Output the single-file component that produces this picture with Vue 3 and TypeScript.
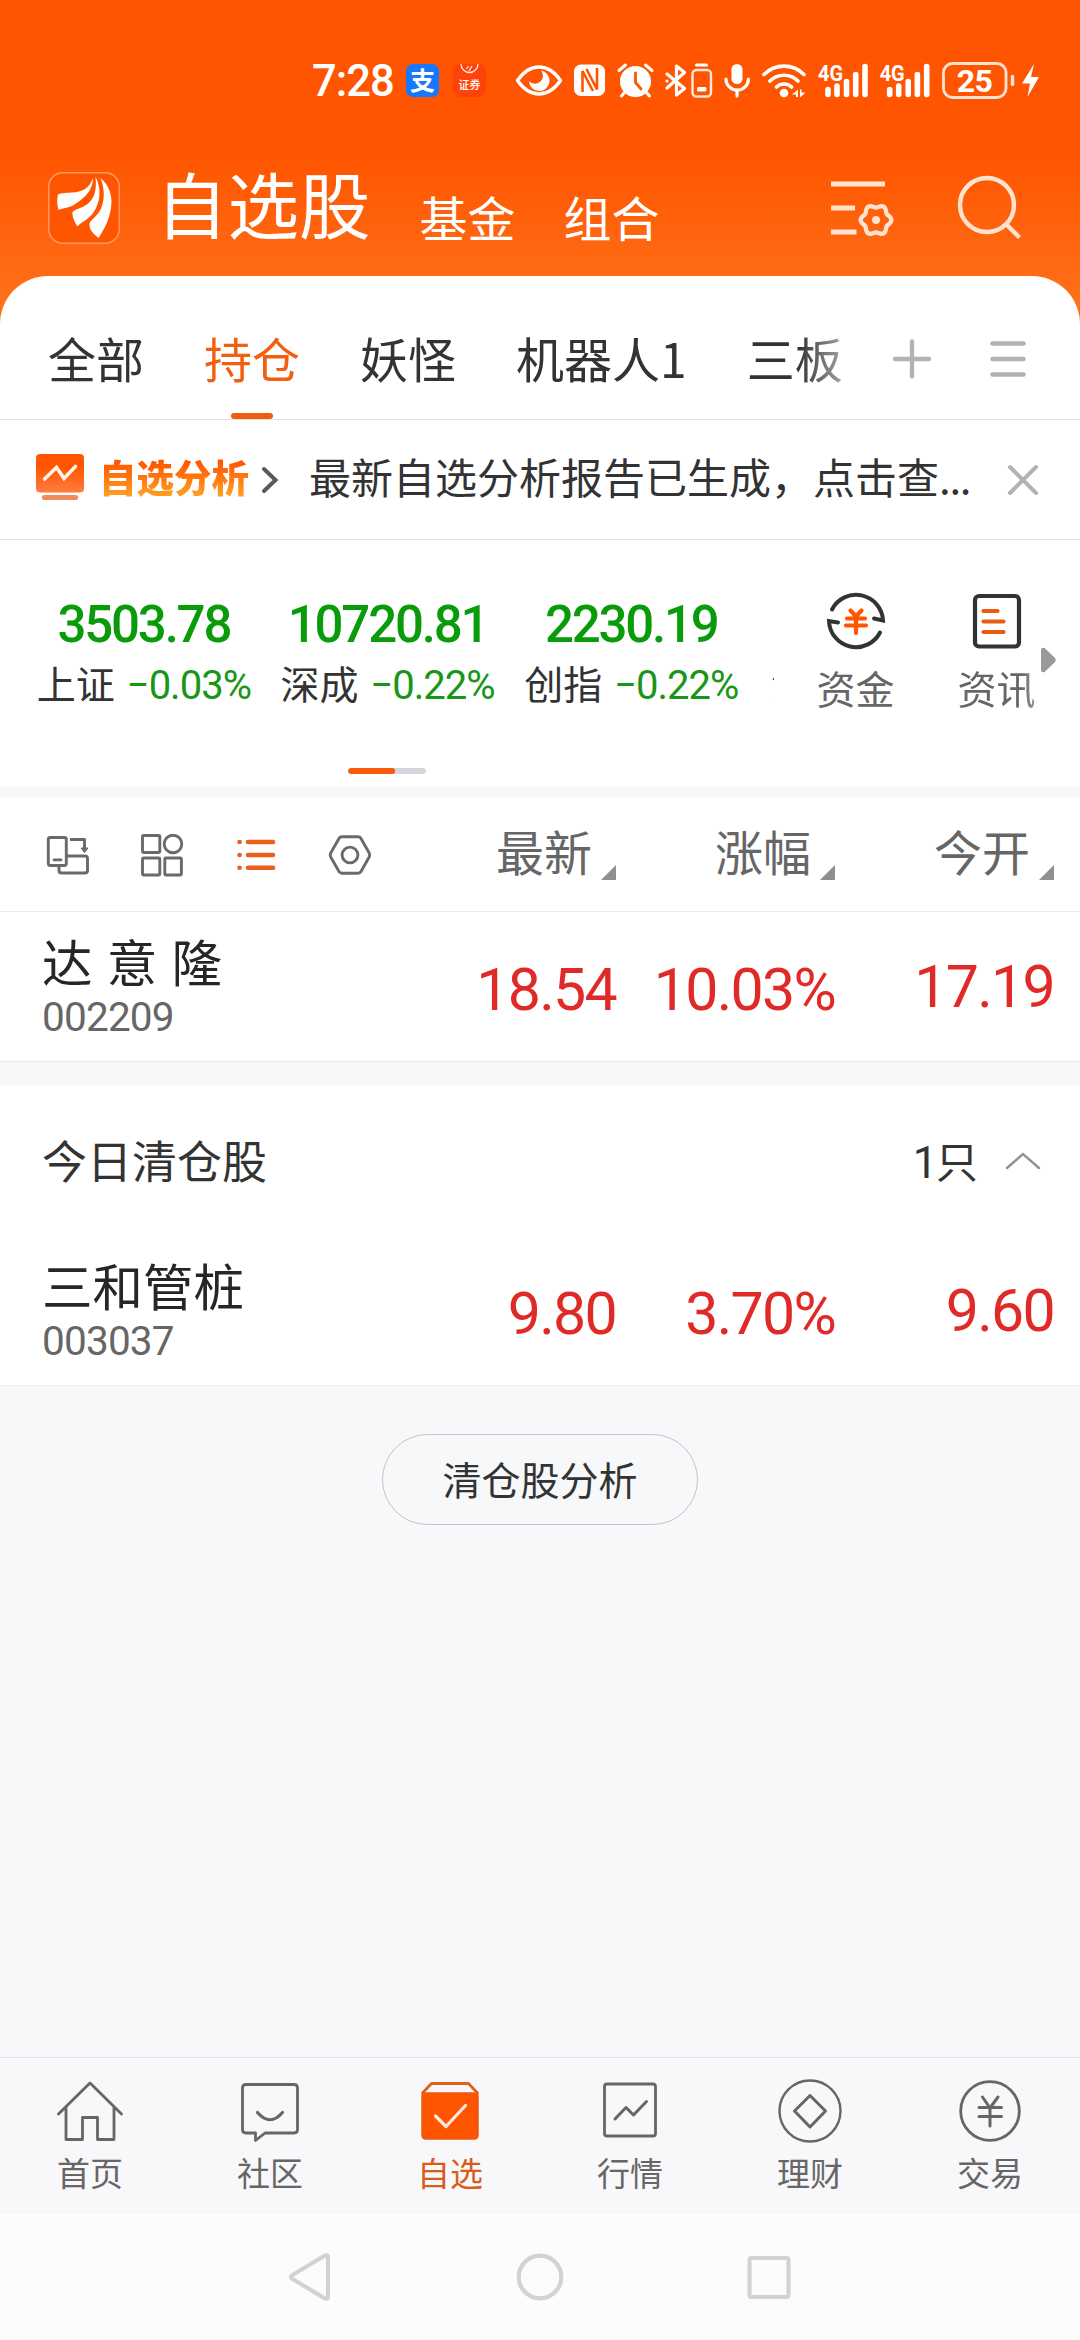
<script setup lang="ts">
interface Index { name: string; value: string; change: string }
interface Stock { name: string; code: string; last: string; pct: string; open: string }

const groups: string[] = ['全部', '持仓', '妖怪', '机器人1', '三板']
const activeGroup = '持仓'
const indices: Index[] = [
  { name: '上证', value: '3503.78', change: '−0.03%' },
  { name: '深成', value: '10720.81', change: '−0.22%' },
  { name: '创指', value: '2230.19', change: '−0.22%' },
]
const columns: string[] = ['最新', '涨幅', '今开']
const held: Stock = { name: '达 意 隆', code: '002209', last: '18.54', pct: '10.03%', open: '17.19' }
const cleared: Stock = { name: '三和管桩', code: '003037', last: '9.80', pct: '3.70%', open: '9.60' }
const tabs: string[] = ['首页', '社区', '自选', '行情', '理财', '交易']

// Six-lobed outline of the settings gear
const gear: string =
  Array.from({ length: 72 }, (_, i) => {
    const a = (i * 5 * Math.PI) / 180
    const r = 13.9 + 1.5 * Math.cos(6 * a)
    return `${i ? 'L' : 'M'}${(46 + r * Math.cos(a)).toFixed(2)} ${(42 + r * Math.sin(a)).toFixed(2)}`
  }).join('') + 'Z'
</script>

<template>
  <div class="app">
    <header class="top">
      <div class="status">
        <span class="clock">7:28</span>
        <svg class="status-icons" width="650" height="50" viewBox="400 55 650 50" fill="none">
          <rect x="406" y="64" width="33" height="33" rx="7" fill="#1677ff" />
          <text x="422.5" y="89.5" text-anchor="middle" class="cjk" font-size="25" font-weight="700" fill="#fff">支</text>
          <rect x="453" y="64" width="33" height="33" rx="7" fill="#ff4209" />
          <path d="M461 64a8.5 8.5 0 0 0 17 0" stroke="#ffe9dc" stroke-width="1.3" />
          <path d="M466.500 69l2-3M469 71l3-5" stroke="#ffe9dc" stroke-width="1.3" />
          <text x="469.500" y="88.500" text-anchor="middle" class="cjk" font-size="11" font-weight="500" fill="#fff">证券</text>
          <g stroke="#fff" stroke-width="3.4" stroke-linecap="round" stroke-linejoin="round">
            <path d="M517.500 80.500C530 62.500 548 62.500 560.500 80.500C548 98.500 530 98.500 517.500 80.500Z" />
          </g>
          <path d="M541 70.500a10.300 10.300 0 1 1-12 10.500a7.500 7.500 0 0 0 12-10.500z" fill="#fff" />
          <rect x="574" y="64.500" width="31" height="31.500" rx="7" fill="#fff" />
          <path d="M582.500 92V71L593 91M597 68V89.500L586.500 69" stroke="#ff5500" stroke-width="2.600" />
          <circle cx="635.500" cy="81.500" r="15.500" fill="#fff" />
          <path d="M619 70.500l6.500-5.500M652 70.500l-6.500-5.500M625 92l-3.500 4M646 92l3.500 4" stroke="#fff" stroke-width="3" stroke-linecap="round" />
          <path d="M635.500 73v9.500l5.500 6.500" stroke="#ff5500" stroke-width="2.800" stroke-linecap="round" />
          <path d="M667 74l17.500 14.500-8 6.500v-29l8 6.500L667 88" stroke="#fff" stroke-width="3.200" stroke-linejoin="round" stroke-linecap="round" />
          <circle cx="667" cy="81" r="1.600" fill="#fff" />
          <path d="M696.500 65h10" stroke="#fff" stroke-width="3" stroke-linecap="round" />
          <rect x="692.500" y="70" width="18.500" height="26.500" rx="4" stroke="#ffe8da" stroke-width="2.400" />
          <rect x="697" y="87" width="9.500" height="4.500" rx="1.500" fill="#fff" />
          <rect x="731.500" y="64" width="11" height="20" rx="5.500" fill="#fff" />
          <path d="M726 79a11.200 11 0 0 0 22.400 0M737 90v6" stroke="#fff" stroke-width="3.200" stroke-linecap="round" />
          <path d="M764 74.500a28 28 0 0 1 40 0M770 81a20 20 0 0 1 28 0M776.500 87a11 11 0 0 1 15 0" stroke="#fff" stroke-width="3.600" stroke-linecap="round" />
          <circle cx="784" cy="93" r="4.300" fill="#fff" />
          <path d="M792 94.500l6-5v7.500h-2v-2.500zM805.500 92.500l-5.500 5v-8h1.500v3z" fill="#fff" />
          <g v-for="dx in [0, 61.7]" :key="dx" :transform="`translate(${dx} 0)`">
            <text x="818" y="80.500" textLength="25" lengthAdjust="spacingAndGlyphs" class="rob" font-size="21.500" font-weight="700" fill="#fff">4G</text>
            <path d="M828 89.500v5M837 86v8.500M846.500 81.500v13M855.700 74.500v20M865 66.500v28" stroke="#fff" stroke-width="5.600" stroke-linecap="round" />
          </g>
          <rect x="943.500" y="63.500" width="62.500" height="34" rx="9" stroke="#ffe3d2" stroke-width="2.800" />
          <text x="974.500" y="91.500" text-anchor="middle" class="rob" font-size="32" font-weight="700" letter-spacing="-.5" fill="#fff">25</text>
          <path d="M1012.500 76.500v8" stroke="#ffe3d2" stroke-width="3.500" stroke-linecap="round" />
          <path d="M1034 64l-12 19.500h8l-2.500 13.500 11.500-20h-8z" fill="#fff" />
        </svg>
      </div>
      <div class="brand">
        <svg class="logo" width="72" height="72" viewBox="0 0 72 72">
          <rect x=".75" y=".75" width="70.500" height="70.500" rx="14" fill="#ff5500" stroke="#ff9a66" stroke-width="1.500" />
          <g fill="#fff">
            <path d="M45 6C41 17 34 20 24 20.500C17 21 12 21 10 22.500C8.800 27 9 33 10.500 38C15 36 22 36 28 31.500C38 25 45 17 45 6Z" />
            <path d="M47.500 5C49 19 46 27 39 32.500C33 36.500 27 37 24.500 40C24 45 27 51 29.500 54.500C33 50 38 49 43 43.500C52 34 54.500 17 47.500 5Z" />
            <path d="M52.500 6C60 12 63.500 21 63.500 30C63 45 57 56 50.500 66C46 62 41 58 41.500 52C42 48 49 45 53 36.500C57.500 26 56 15 52.500 6Z" />
          </g>
        </svg>
        <h1>自选股</h1>
        <span class="sub">基金</span>
        <span class="sub">组合</span>
        <svg class="tune" width="64" height="60" viewBox="0 0 64 60" fill="none" stroke="#ffe3d0" stroke-width="5">
          <path d="M1 6h54M1 30h24M1 54h25.500" />
          <path :d="gear" stroke-width="4.300" />
          <circle cx="46" cy="42" r="4" fill="#ffe3d0" stroke="none" />
        </svg>
        <svg class="search" width="66" height="66" viewBox="0 0 66 66" fill="none" stroke="#ffe3d0" stroke-width="4.400">
          <circle cx="30" cy="30" r="27" />
          <path d="M49 49l13.500 13.500" />
        </svg>
      </div>
    </header>

    <main>
      <nav class="groups">
        <div class="group-list">
          <span v-for="g in groups" :key="g" class="group" :class="{ on: g === activeGroup }">{{ g }}</span>
        </div>
        <svg class="plus" width="40" height="40" viewBox="0 0 40 40" stroke="#b2b2b2" stroke-width="4.300" stroke-linecap="round">
          <path d="M20 2.500v35M3 20h34" />
        </svg>
        <svg class="menu" width="36" height="40" viewBox="0 0 36 40" stroke="#b2b2b2" stroke-width="4.600" stroke-linecap="round">
          <path d="M2.500 4.500h31M2.500 20h31M2.500 35.500h31" />
        </svg>
      </nav>

      <section class="notice">
        <svg width="48" height="47" viewBox="0 0 48 47" fill="none">
          <defs>
            <linearGradient id="screen" x1="0" y1="0" x2="0" y2="1">
              <stop offset=".35" stop-color="#ff5500" /><stop offset="1" stop-color="#ff7d42" />
            </linearGradient>
          </defs>
          <rect width="48" height="38.500" rx="4" fill="url(#screen)" />
          <path d="M8.500 25L20.500 13.500l7.500 11L39.500 12.500" stroke="#fff3e8" stroke-width="3.600" stroke-linecap="round" />
          <rect x="6" y="41" width="36" height="5" rx="2" fill="#f08a5c" />
        </svg>
        <b>自选分析</b>
        <svg class="go" width="18" height="30" viewBox="0 0 18 30" fill="none" stroke="#5a5a5a" stroke-width="4" stroke-linecap="round">
          <path d="M3 4l11.500 11L3 26" />
        </svg>
        <span class="msg">最新自选分析报告已生成，点击查<i>...</i></span>
        <svg class="close" width="32" height="32" viewBox="0 0 32 32" stroke="#b2b2b2" stroke-width="4" stroke-linecap="round">
          <path d="M3 3l26 26M29 3L3 29" />
        </svg>
      </section>

      <section class="market">
        <div class="indices">
          <div v-for="i in indices" :key="i.name" class="index">
            <span class="value">{{ i.value }}</span>
            <span class="line">{{ i.name }}<em>{{ i.change }}</em></span>
          </div>
          <div class="index next">
            <span class="value"></span>
            <span class="line">沪深</span>
          </div>
        </div>
        <div class="shortcuts">
          <div class="shortcut">
            <svg width="60" height="60" viewBox="0 0 60 60" fill="none" stroke="#333" stroke-width="4" stroke-linecap="round">
              <path d="M6 18.500A27 27 0 0 1 57 29.500L48 27.500" />
              <path d="M54 41.500A27 27 0 0 1 3 30L12 31.500" />
              <path d="M24.500 19.500l5.500 6 5.500-6M21 27.500h18M20 34.500h20M30 27v15" stroke="#ff5500" stroke-width="4.200" />
            </svg>
            <span>资金</span>
          </div>
          <div class="shortcut fade">
            <svg width="60" height="60" viewBox="0 0 60 60" fill="none" stroke="#333" stroke-width="4.200" stroke-linecap="round">
              <rect x="8" y="5" width="44" height="50.500" rx="4" />
              <path d="M16.500 20h14M16.500 30.500h20M16.500 41h20" stroke="#ea5c14" />
            </svg>
            <span>资讯</span>
          </div>
          <svg class="more" width="15" height="26" viewBox="0 0 15 26">
            <path d="M0 3Q0 0 3.500 1L13.500 10.500Q16 13 13.500 15.500L3.500 25Q0 26 0 23Z" fill="#999" />
          </svg>
        </div>
        <div class="pager"><i></i></div>
      </section>

      <section class="thead">
        <svg class="views" width="330" height="44" viewBox="45 833 330 44" fill="none" stroke="#6a6a6a" stroke-width="2.900" stroke-linejoin="round">
          <rect x="48.300" y="837.500" width="18" height="28" rx="2" />
          <path d="M54 859.800h7" stroke-width="2.800" stroke-linecap="round" />
          <path d="M66.500 856h18.500q2.500 0 2.500 2.500v12q0 2.500-2.500 2.500H61.500q-2.500 0-2.500-2.500V866" />
          <path d="M70 839.500h14.500v9" /><path d="M81 848h7l-3.500 4.500z" fill="#6a6a6a" stroke-width="1" />
          <rect x="142.500" y="835.500" width="17.300" height="17" rx="1" />
          <circle cx="173" cy="844" r="8.800" />
          <rect x="142.500" y="858" width="17.300" height="17" rx="1" />
          <rect x="164.800" y="858" width="16.600" height="17" rx="1" />
          <g stroke="#ea5f1a" stroke-width="4.600" stroke-linecap="round">
            <path d="M239.500 842h.1M239.500 855h.1M239.500 867.800h.1M248 842h25M248 855h25M248 867.800h25" />
          </g>
          <path d="M342 836.800h16q2 0 3 1.700l8.200 14.500q1 2 0 4L361 871.500q-1 1.700-3 1.700h-16q-2 0-3-1.700L330.700 857q-1-2 0-4L339 838.500q1-1.700 3-1.700Z" />
          <circle cx="350" cy="855" r="7.900" />
        </svg>
        <span v-for="c in columns" :key="c" class="col">{{ c }}<svg width="15" height="15" viewBox="0 0 15 15"><path d="M15 0v15H0z" fill="#8e8e93" /></svg></span>
      </section>

      <section class="row">
        <div class="who"><span class="name">{{ held.name }}</span><span class="code">{{ held.code }}</span></div>
        <span class="num">{{ held.last }}</span>
        <span class="num">{{ held.pct }}</span>
        <span class="num open">{{ held.open }}</span>
      </section>

      <div class="band"></div>

      <section class="cleared">
        <span class="title">今日清仓股</span>
        <span class="count"><i>1</i>只</span>
        <svg width="36" height="18" viewBox="0 0 36 18" fill="none" stroke="#929292" stroke-width="2.400" stroke-linecap="round">
          <path d="M2 16L18 2l16 14" />
        </svg>
      </section>
      <section class="row last">
        <div class="who"><span class="name">{{ cleared.name }}</span><span class="code">{{ cleared.code }}</span></div>
        <span class="num">{{ cleared.last }}</span>
        <span class="num">{{ cleared.pct }}</span>
        <span class="num open">{{ cleared.open }}</span>
      </section>

      <div class="rest"><button>清仓股分析</button></div>
    </main>

    <nav class="tabs">
      <div v-for="(t, k) in tabs" :key="t" class="tab" :class="{ on: t === '自选' }">
        <svg width="70" height="70" viewBox="0 0 70 70" fill="none" stroke="#666" stroke-width="2.800" stroke-linejoin="round" stroke-linecap="round">
          <template v-if="k === 0">
            <path d="M3.500 36L35 5l31.500 31" />
            <path d="M11 30v31.500h16.500V39.500h15V61.500h16.500V30" />
          </template>
          <template v-else-if="k === 1">
            <path d="M11 6.500h48q3.500 0 3.500 3.500v41.500q0 3.500-3.500 3.500H30l-9.500 7.500V55H11q-3.500 0-3.500-3.500V10q0-3.500 3.500-3.500Z" />
            <path d="M22.500 34.500q12.500 14.500 25 0" stroke-width="3.200" />
          </template>
          <template v-else-if="k === 2">
            <path d="M7.500 15L16.500 5.500h37L62.500 15" stroke="#e0611c" />
            <path d="M10 15h50q3 0 3 3v39q0 4-4 4H11q-4 0-4-4V18q0-3 3-3Z" fill="#ff5500" stroke="#e85a10" stroke-width="1.500" />
            <path d="M20.500 38L31 48.500 50.500 27.500" stroke="#ffe9dc" stroke-width="3.200" />
          </template>
          <template v-else-if="k === 3">
            <rect x="9.500" y="6" width="51" height="52" rx="2.500" />
            <path d="M20 41l11-11.500 7.500 7.500L51.500 23.500" stroke-width="3" />
          </template>
          <template v-else-if="k === 4">
            <circle cx="35" cy="33" r="30.500" stroke-width="2.400" />
            <path d="M35 17.500L50.500 33 35 49 19.500 33Z" stroke-width="3" />
          </template>
          <template v-else>
            <circle cx="35" cy="33" r="29.300" />
            <path d="M27.500 19L35 30l8-11M24 29.500h22.500M24 38.500h22.500M35 30v18" stroke-width="3" />
          </template>
        </svg>
        <span>{{ t }}</span>
      </div>
    </nav>

    <footer class="sysnav">
      <svg width="50" height="50" viewBox="0 0 50 50"><path d="M38.500 3.800q3.500-1.800 3.500 2v38.400q0 3.800-3.500 2L6.500 27q-3-2 0-4Z" /></svg>
      <svg width="50" height="50" viewBox="0 0 50 50"><circle cx="25" cy="25" r="21.300" /></svg>
      <svg width="50" height="50" viewBox="0 0 50 50"><rect x="5.500" y="6" width="39" height="39" rx="2" /></svg>
    </footer>
  </div>
</template>

<style>
body { margin: 0; background: #f7f8fa; }
</style>

<style scoped>
.app {
  width: 1080px; height: 2340px; overflow: hidden; display: flex; flex-direction: column;
  font-family: "Noto Sans CJK SC", sans-serif; color: #333;
  background: linear-gradient(#ff5500 0 155px, #ff7019 300px, #ff7019 330px, #f7f8fa 330px);
}
svg { display: block; flex: none; }
i, em { font-style: normal; }
.cjk { font-family: "Noto Sans CJK SC", sans-serif; }
.rob, .clock, .value, em, .code, .num { font-family: Roboto, sans-serif; }

.top { height: 276px; flex: none; }
.status { height: 110px; display: flex; padding-left: 312px; }
.clock { width: 88px; font-size: 43.500px; font-weight: 500; line-height: 50px; margin-top: 57px; color: #fff; letter-spacing: -1px; white-space: nowrap; }
.status-icons { margin-top: 55px; }
.brand { height: 166px; display: flex; align-items: flex-start; color: #fff; }
.logo { margin: 62px 0 0 48px; }
h1 { margin: 50px 49px 0 36px; font-size: 71.500px; line-height: 84px; font-weight: 400; }
.sub { font-size: 48px; line-height: 60px; margin: 76px 48px 0 0; }
.tune { margin: 68px 0 0 122px; }
.search { margin: 65px 0 0 63px; }

main { flex: 1; display: flex; flex-direction: column; background: #fff; border-radius: 48px 48px 0 0; }
.groups { height: 143px; border-bottom: 1px solid #e4e4e6; display: flex; align-items: flex-start; flex: none; }
.group-list {
  width: 794px; height: 143px; margin-left: 48px; display: flex; gap: 60px; overflow: hidden; white-space: nowrap;
  mask-image: linear-gradient(90deg, #000 750px, rgba(0, 0, 0, .45) 794px);
}
.group { position: relative; flex: none; font-size: 48px; line-height: 60px; height: 143px; box-sizing: border-box; padding-top: 51px; }
.group.on { color: #f2600f; }
.group.on::after { content: ""; position: absolute; left: 27px; bottom: 0; width: 42px; height: 6px; border-radius: 3px; background: #f45c0c; }
.plus { margin: 63px 0 0 50px; }
.menu { margin: 63px 0 0 58px; }

.notice { height: 119px; border-bottom: 1px solid #e4e4e6; display: flex; align-items: flex-start; flex: none; padding-left: 36px; }
.notice > svg:first-child { margin-top: 34px; }
.notice b {
  font-size: 37.500px; line-height: 50px; font-weight: 900; margin: 31px 0 0 15px; white-space: nowrap;
  background: linear-gradient(#ff5500 20%, #ff9a22 85%); background-clip: text; color: transparent;
}
.go { margin: 45px 0 0 12px; }
.msg { margin: 28px 0 0 30px; font-size: 42px; line-height: 56px; width: 698px; white-space: nowrap; }
.msg i { letter-spacing: -1.300px; }
.close { margin-top: 44px; }

.market { height: 246px; flex: none; display: grid; grid-template: 224px 22px / 774px 306px; }
.indices { display: flex; overflow: hidden; padding-left: 22px; }
.index { width: 243.700px; flex: none; display: flex; flex-direction: column; align-items: center; white-space: nowrap; }
.value { height: 60px; margin-top: 55px; font-size: 51px; line-height: 60px; font-weight: 500; letter-spacing: -2.200px; color: #0a9b0a; }
.line { font-size: 39px; line-height: 50px; margin-top: 2px; }
.index em { font-size: 40px; letter-spacing: -1px; color: #179617; margin-left: 12px; }
.next { align-items: flex-start; padding-left: 18px; }
.shortcuts { display: flex; position: relative; padding-left: 11px; }
.shortcut { width: 141px; display: flex; flex-direction: column; align-items: center; padding-top: 51px; font-size: 39px; line-height: 50px; color: #666; }
.shortcut span { margin-top: 11px; }
.fade { mask-image: linear-gradient(90deg, #000 95px, rgba(0, 0, 0, .5) 118px); }
.more { position: absolute; left: 267px; top: 107px; }
.pager { width: 78px; height: 6px; margin: 4px 0 0 348px; border-radius: 3px; overflow: hidden; background: #d3d7dc; }
.pager i { display: block; width: 47px; height: 6px; border-radius: 3px; background: #f65b0c; }

.thead { height: 113px; border-top: 12px solid #f7f8fa; border-bottom: 1px solid #ebebed; display: flex; flex: none; }
.views { margin: 35px 22px 0 45px; }
.col { width: 219px; height: 82px; display: flex; justify-content: flex-end; align-items: flex-end; gap: 9px; font-size: 48px; line-height: 60px; color: #666; }

.row { height: 149px; flex: none; display: flex; border-bottom: 1px solid #ebebed; }
.who { width: 355px; padding-left: 42px; display: flex; flex-direction: column; white-space: nowrap; }
.name { font-size: 50.500px; line-height: 60px; margin-top: 18px; word-spacing: 3px; color: #262626; }
.code { font-size: 40.500px; line-height: 48px; margin-top: 3px; letter-spacing: -.800px; color: #666; }
.num { width: 219px; text-align: right; font-size: 59px; line-height: 70px; margin-top: 43px; letter-spacing: -1.700px; color: #e02a28; }
.num.open { margin-top: 40px; }
.band { height: 24px; flex: none; background: #f7f8fa; }

.cleared { height: 150px; flex: none; display: flex; align-items: flex-start; padding-left: 42px; }
.title { font-size: 45px; line-height: 56px; margin-top: 46px; }
.count { font-size: 42px; line-height: 56px; margin: 46px 0 0 auto; }
.count i { font-family: Roboto, sans-serif; font-size: 44px; letter-spacing: -1.500px; }
.cleared svg { margin: 66px 39px 0 27px; }

.rest { flex: 1; background: #f7f8fa; display: flex; justify-content: center; align-items: flex-start; padding-top: 48px; }
button { width: 316px; height: 91px; padding: 0 0 4px; border: 1.500px solid #c2c3c6; border-radius: 46px; background: none; font: 39px "Noto Sans CJK SC", sans-serif; color: #333; }

.tabs { height: 156px; flex: none; border-top: 1px solid #e0e1e4; background: #f8f8fb; display: flex; }
.tab { width: 180px; display: flex; flex-direction: column; align-items: center; font-size: 33px; line-height: 40px; color: #666; }
.tab svg { margin-top: 20px; }
.tab span { margin-top: 4px; }
.tab.on { color: #da5c1a; }

.sysnav { height: 126px; flex: none; background: #fcfcfc; display: flex; justify-content: center; gap: 179px; }
.sysnav svg { margin-top: 38px; fill: none; stroke: #d2d2d2; stroke-width: 4.200; }
</style>
